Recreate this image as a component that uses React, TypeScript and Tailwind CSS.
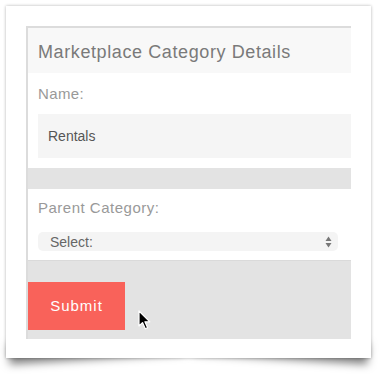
export default function App() {
  return (
    <div className="w-[385px] h-[388px] bg-white pt-[6px] pl-[6px] font-['Liberation_Sans',Arial,sans-serif]">
      <div className="relative isolate w-[365px]">
        {/* lifted corner shadows */}
        <div className="absolute -z-10 left-[2px] bottom-[14px] w-[175px] h-[20px] -rotate-[3.5deg] shadow-[0_15px_9px_rgba(0,0,0,0.5)]" />
        <div className="absolute -z-10 right-[2px] bottom-[14px] w-[175px] h-[20px] rotate-[3.5deg] shadow-[0_15px_9px_rgba(0,0,0,0.5)]" />

        <div className="relative bg-white shadow-[0_0_3px_rgba(0,0,0,0.3)] pt-[20px] pl-[20px] pb-[19px]">
          <div className="w-[325px] h-[313px] bg-[#e3e3e3] border-t-2 border-l-2 border-[#dcdcdc] flex flex-col">
            {/* Header */}
            <div className="h-[45px] shrink-0 bg-[#f8f8f8] flex items-center pl-[10px] pt-[2px]">
              <h2 className="text-[18px] tracking-[0.6px] text-[#7a7a7a] leading-none">
                Marketplace Category Details
              </h2>
            </div>

            {/* Name */}
            <div className="h-[95px] shrink-0 bg-white pt-[11px] pl-[10px]">
              <p className="text-[15px] leading-[20px] tracking-[0.4px] text-[#999]">Name:</p>
              <div className="mt-[10px] h-[44px] bg-[#f5f5f5] flex items-center pl-[10px]">
                <span className="text-[14px] text-[#555]">Rentals</span>
              </div>
            </div>

            <div className="h-[21px] shrink-0" />

            {/* Parent category */}
            <div className="h-[72px] shrink-0 bg-white border-b border-[#dadada] pt-[9px] pl-[10px]">
              <p className="text-[15px] leading-[20px] tracking-[0.5px] text-[#999]">Parent Category:</p>
              <div className="mt-[14px] w-[300px] h-[19px] rounded-[5px] bg-[#f4f4f4] flex items-center justify-between pl-[12px] pr-[6px]">
                <span className="text-[14px] leading-none text-[#666]">Select:</span>
                <svg width="7" height="12" viewBox="0 0 7 12" fill="#777">
                  <path d="M3.5 0.5 L6.5 5 L0.5 5 Z" />
                  <path d="M0.5 7 L6.5 7 L3.5 11.5 Z" />
                </svg>
              </div>
            </div>

            {/* Actions */}
            <div className="flex-1 pt-[21px] relative">
              <button className="w-[97px] h-[48px] bg-[#f9625a] text-white text-[15px] tracking-[1px] flex items-center justify-center">
                Submit
              </button>
              <svg
                className="absolute left-[110px] top-[49px]"
                width="13"
                height="20"
                viewBox="0 0 13 20"
              >
                <path
                  d="M1 1 L1 16 L4.5 12.6 L7.3 18.8 L9.6 17.8 L6.9 11.8 L11.8 11.8 Z"
                  fill="#000"
                  stroke="#fff"
                  strokeWidth="1.2"
                  strokeLinejoin="round"
                />
              </svg>
            </div>
          </div>
        </div>
      </div>
    </div>
  )
}
